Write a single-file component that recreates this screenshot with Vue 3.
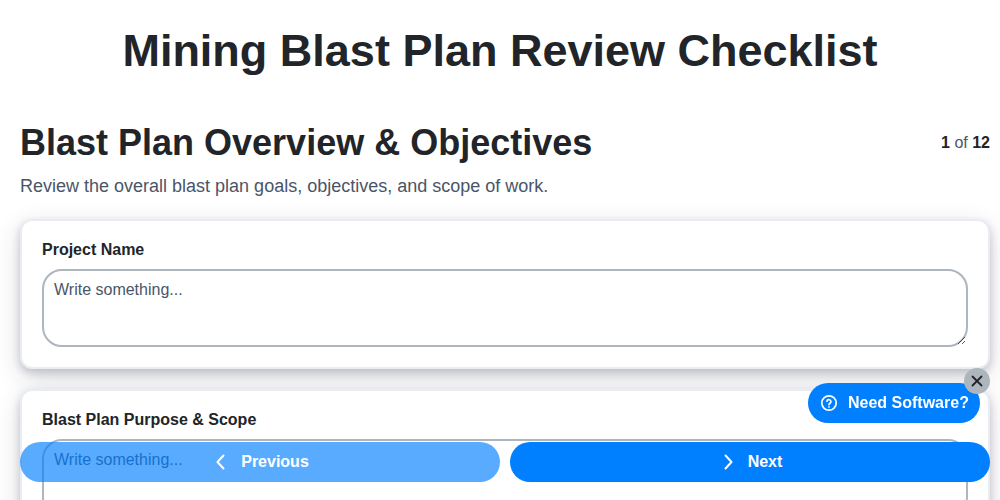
<script setup>
const fields = ['Project Name', 'Blast Plan Purpose & Scope']
</script>

<template>
  <div class="page">
    <h1 class="title">Mining Blast Plan Review Checklist</h1>
    <div class="head">
      <h2 class="section">Blast Plan Overview &amp; Objectives</h2>
      <div class="count"><b>1</b> of <b>12</b></div>
    </div>
    <p class="desc">Review the overall blast plan goals, objectives, and scope of work.</p>
    <div v-for="f in fields" :key="f" class="card">
      <label class="label">{{ f }}</label>
      <textarea class="input" placeholder="Write something..."></textarea>
    </div>

    <div class="promo">
      <button class="need">
        <svg width="18" height="18" viewBox="0 0 18 18" fill="none" stroke="#fff" stroke-width="1.7" stroke-linecap="round">
          <circle cx="9" cy="9" r="7.2" />
          <path d="M6.9 7.2a2.1 2.1 0 0 1 4.1.5c0 1.4-2 1.6-2 2.9" />
          <path d="M9 12.8v.1" />
        </svg>
        <span>Need Software?</span>
      </button>
      <button class="close" aria-label="Close">
        <svg width="12" height="12" viewBox="0 0 12 12" fill="none" stroke="#212529" stroke-width="1.8" stroke-linecap="round">
          <path d="M1.5 1.5l9 9M10.5 1.5l-9 9" />
        </svg>
      </button>
    </div>

    <div class="nav">
      <button class="btn prev">
        <svg width="12" height="16" viewBox="0 0 12 16" fill="none" stroke="#fff" stroke-width="2" stroke-linecap="round" stroke-linejoin="round">
          <path d="M8.5 1.5L2.5 8l6 6.5" />
        </svg>
        <span>Previous</span>
      </button>
      <button class="btn">
        <svg width="12" height="16" viewBox="0 0 12 16" fill="none" stroke="#fff" stroke-width="2" stroke-linecap="round" stroke-linejoin="round">
          <path d="M3.5 1.5L9.5 8l-6 6.5" />
        </svg>
        <span>Next</span>
      </button>
    </div>
  </div>
</template>

<style>
html, body { margin: 0; height: 100%; overflow: hidden; background: #fff; }
</style>

<style scoped>
.page {
  height: 500px;
  overflow: hidden;
  padding: 0 10px 0 20px;
  box-sizing: border-box;
  font-family: "Liberation Sans", Arial, sans-serif;
  color: #212529;
}
.title {
  margin: 0;
  padding-top: 24px;
  font-size: 45px;
  line-height: 54px;
  font-weight: 700;
  text-align: center;
  margin-right: 10px;
}
.head {
  display: flex;
  justify-content: space-between;
  align-items: center;
  margin-top: 43px;
}
.section {
  margin: 0;
  font-size: 36px;
  line-height: 43px;
  font-weight: 700;
}
.count {
  font-size: 16px;
  color: #4a5568;
}
.count b { color: #212529; }
.desc {
  margin: 11px 0 0;
  font-size: 18px;
  line-height: 22px;
  color: #4a5568;
}
.card {
  margin-top: 22px;
  padding: 19px 20px 20px;
  border: 2px solid #e9ecf2;
  border-radius: 12px;
  background: #fff;
  box-shadow: 0 4px 8px rgba(33, 37, 60, 0.2), 0 8px 26px rgba(33, 37, 60, 0.16);
  display: flex;
  flex-direction: column;
}
.card + .card {
  margin-top: 20px;
}
.label {
  font-size: 16px;
  line-height: 19px;
  font-weight: 700;
  margin-bottom: 10px;
}
.input {
  display: block;
  height: 78px;
  box-sizing: border-box;
  padding: 10px;
  border: 2px solid #adb5bd;
  border-radius: 20px;
  outline: none;
  font-family: inherit;
  font-size: 16px;
  line-height: 18px;
  color: #212529;
  background: #fff;
}
.input::placeholder {
  color: #4a5568;
  opacity: 1;
}
.nav {
  position: fixed;
  left: 20px;
  right: 10px;
  bottom: 18px;
  display: flex;
  gap: 10px;
}
.btn {
  flex: 1;
  height: 40px;
  display: flex;
  align-items: center;
  justify-content: center;
  gap: 14px;
  padding: 0 0 0 4px;
  border: none;
  border-radius: 20px;
  background: #007fff;
  color: #fff;
  font-family: inherit;
  font-size: 16px;
  font-weight: 700;
}
.prev {
  opacity: 0.65;
}
.promo {
  position: fixed;
  right: 20px;
  bottom: 77px;
}
.need {
  width: 172px;
  height: 40px;
  display: flex;
  align-items: center;
  gap: 10px;
  padding: 0 0 0 12px;
  border: none;
  border-radius: 20px;
  background: #007fff;
  color: #fff;
  font-family: inherit;
  font-size: 16px;
  font-weight: 700;
  white-space: nowrap;
}
.close {
  position: absolute;
  top: -15px;
  right: -10px;
  width: 26px;
  height: 26px;
  padding: 0;
  border: none;
  border-radius: 50%;
  background: #adb5bd;
  display: flex;
  align-items: center;
  justify-content: center;
}
</style>
